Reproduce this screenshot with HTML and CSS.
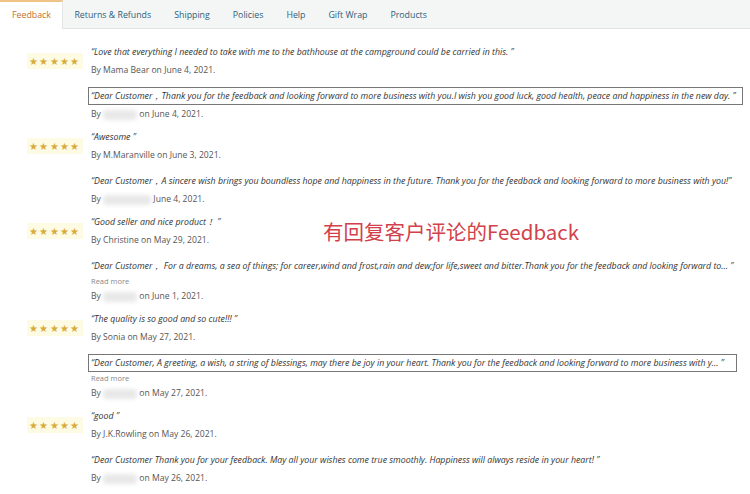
FILE: index.html
```html
<!DOCTYPE html>
<html lang="en">
<head>
<meta charset="UTF-8">
<title>Feedback</title>
<link rel="stylesheet" href="styles.css">
</head>
<body>

<div class="tabs">
  <div class="tab active">Feedback</div>
  <div class="tab">Returns &amp; Refunds</div>
  <div class="tab">Shipping</div>
  <div class="tab">Policies</div>
  <div class="tab">Help</div>
  <div class="tab">Gift Wrap</div>
  <div class="tab">Products</div>
</div>

<div class="list">
  <div class="note">有回复客户评论的Feedback</div>

  <div class="review">
    <div class="stars"><span>★★★★★</span></div>
    <div class="body">
      <div class="comment">“Love that everything I needed to take with me to the bathhouse at the campground could be carried in this. ”</div>
      <div class="by">By Mama Bear on June 4, 2021.</div>
      <div class="reply boxed">“Dear Customer，Thank you for the feedback and looking forward to more business with you.I wish you good luck, good health, peace and happiness in the new day. ”</div>
      <div class="by">By <span class="blur"></span> on June 4, 2021.</div>
    </div>
  </div>

  <div class="review">
    <div class="stars"><span>★★★★★</span></div>
    <div class="body">
      <div class="comment">“Awesome ”</div>
      <div class="by">By M.Maranville on June 3, 2021.</div>
      <div class="reply">“Dear Customer，A sincere wish brings you boundless hope and happiness in the future. Thank you for the feedback and looking forward to more business with you!”</div>
      <div class="by">By <span class="blur wide"></span> June 4, 2021.</div>
    </div>
  </div>

  <div class="review">
    <div class="stars"><span>★★★★★</span></div>
    <div class="body">
      <div class="comment">“Good seller and nice product！ ”</div>
      <div class="by">By Christine on May 29, 2021.</div>
      <div class="reply">“Dear Customer，  For a dreams, a sea of things; for career,wind and frost,rain and dew;for life,sweet and bitter.Thank you for the feedback and looking forward to... ”</div>
      <div class="more">Read more</div>
      <div class="by">By <span class="blur"></span> on June 1, 2021.</div>
    </div>
  </div>

  <div class="review">
    <div class="stars"><span>★★★★★</span></div>
    <div class="body">
      <div class="comment">“The quality is so good and so cute!!! ”</div>
      <div class="by">By Sonia on May 27, 2021.</div>
      <div class="reply boxed short">“Dear Customer, A greeting, a wish, a string of blessings, may there be joy in your heart. Thank you for the feedback and looking forward to more business with y... ”</div>
      <div class="more">Read more</div>
      <div class="by">By <span class="blur"></span> on May 27, 2021.</div>
    </div>
  </div>

  <div class="review">
    <div class="stars"><span>★★★★★</span></div>
    <div class="body">
      <div class="comment">“good ”</div>
      <div class="by">By J.K.Rowling on May 26, 2021.</div>
      <div class="reply">“Dear Customer Thank you for your feedback. May all your wishes come true smoothly. Happiness will always reside in your heart! ”</div>
      <div class="by">By <span class="blur"></span> on May 26, 2021.</div>
    </div>
  </div>
</div>

</body>
</html>
```

FILE: styles.css
```css
html, body {
  margin: 0;
  padding: 0;
  background-color: white;
  font-family: "Open Sans", "Noto Sans", sans-serif;
  color: #333;
}
.tabs {
  display: flex;
  height: 28px;
  background-color: #f4f5f5;
  border-bottom: 1px solid #e3e3e3;
}
.tab {
  padding: 0 11.5px;
  font-size: 8.8px;
  line-height: 30px;
  color: #2d5f7a;
}
.tab.active {
  background-color: white;
  color: #c0722e;
  border-top: 2px solid #f0c487;
  border-right: 1px solid #e6e6e6;
  line-height: 26px;
  height: 27px;
  margin-bottom: -1px;
  padding: 0 11px 0 12px;
}
.list {
  position: relative;
  padding-top: 14px;
}
.note {
  position: absolute;
  left: 323px;
  top: 187px;
  font-family: "Noto Sans CJK SC", sans-serif;
  font-size: 20.5px;
  color: #d2414b;
}
.review {
  display: flex;
  margin-bottom: 5px;
}
.stars {
  width: 88px;
  flex: none;
  padding-top: 5px;
}
.stars span {
  display: inline-block;
  margin-left: 27px;
  padding: 2px 2px;
  background-color: #fdfbe3;
  color: #d9aa3a;
  font-size: 10px;
  letter-spacing: 1.3px;
  line-height: 12px;
}
.body {
  flex: 1;
  padding-right: 7px;
}
.comment, .reply {
  font-style: italic;
  font-size: 8.8px;
  line-height: 18px;
  padding-left: 3px;
  white-space: nowrap;
}
.by {
  font-size: 8.6px;
  line-height: 18px;
  color: #555;
  padding-left: 3px;
}
.reply {
  margin-top: 8px;
  border: 1px solid transparent;
  line-height: 14px;
  padding: 1px 3px 1px 2px;
}
.reply.boxed {
  border-color: #777;
}
.reply.short {
  margin-right: 6px;
}
.more {
  font-size: 7.5px;
  line-height: 12px;
  color: #888;
  padding-left: 3px;
}
.blur {
  display: inline-block;
  width: 34px;
  height: 10px;
  vertical-align: middle;
  background-color: #e8e8e8;
  border-radius: 4px;
  filter: blur(2px);
}
.blur.wide {
  width: 48px;
}
```
